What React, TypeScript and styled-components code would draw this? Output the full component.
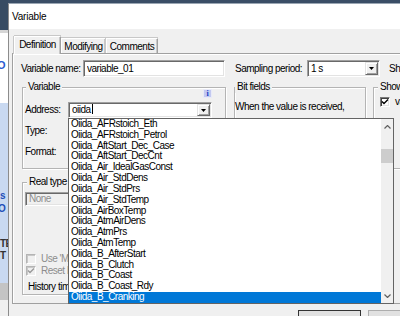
import React from "react";
import styled, { createGlobalStyle } from "styled-components";

const GlobalStyle = createGlobalStyle`
  html, body { margin: 0; padding: 0; width: 400px; height: 316px; overflow: hidden; background: #f0f0f0; }
  body { font-family: "Liberation Sans", Arial, sans-serif; font-size: 10px; letter-spacing: -0.5px; color: #000; }
  #root { width: 400px; height: 316px; }
`;

const Screen = styled.div`
  display: flex;
  width: 400px;
  height: 316px;
  overflow: hidden;
`;

const Backdrop = styled.div`
  width: 8px;
  flex: none;
  display: flex;
  flex-direction: column;
  overflow: hidden;
`;

const Band = styled.div<{ $h: number; $bg: string }>`
  flex: none;
  height: ${(p) => p.$h}px;
  background: ${(p) => p.$bg};
  overflow: hidden;
  white-space: nowrap;
`;

const BandGlyph = styled.div<{ $top: number; $left: number; $color: string; $size?: number }>`
  margin-top: ${(p) => p.$top}px;
  margin-left: ${(p) => p.$left}px;
  color: ${(p) => p.$color};
  font-size: ${(p) => p.$size ?? 10}px;
  line-height: 10px;
  height: 10px;
  font-weight: bold;
`;

const WindowColumn = styled.div`
  flex: 1;
  min-width: 0;
  display: flex;
  flex-direction: column;
`;

const BackWindowEdge = styled.div`
  height: 3px;
  flex: none;
  background: #3a4e66;
`;

const Dialog = styled.div`
  width: 500px;
  flex: 1;
  display: flex;
  flex-direction: column;
  background: #f0f0f0;
  border-left: 1px solid #8c8c8c;
  border-top: 1px solid #9aa6b3;
`;

const TitleBar = styled.div`
  height: 25px;
  flex: none;
  background: #ffffff;
  display: flex;
  align-items: center;
  padding-left: 3px;
  font-size: 10px;
  letter-spacing: -0.2px;
`;

const DialogBody = styled.div`
  display: flex;
  flex-direction: column;
  padding: 7px 0 0 3px;
`;

const TabStrip = styled.div`
  display: flex;
  align-items: flex-end;
  height: 17px;
  padding-left: 2px;
`;

const Tab = styled.div<{ $active?: boolean; $w: number }>`
  position: relative;
  z-index: ${(p) => (p.$active ? 2 : 1)};
  box-sizing: border-box;
  width: ${(p) => p.$w}px;
  height: ${(p) => (p.$active ? 18 : 15)}px;
  margin-bottom: ${(p) => (p.$active ? -1 : 0)}px;
  display: flex;
  align-items: center;
  justify-content: center;
  background: #f0f0f0;
  border: 1px solid #a0a0a0;
  border-bottom: none;
  border-left-color: #ffffff;
  border-top-color: #ffffff;
  box-shadow: -1px 0 0 #c8c8c8, 0 -1px 0 #c8c8c8, inset -1px 0 0 #c8c8c8;
  padding-bottom: ${(p) => (p.$active ? 2 : 0)}px;
`;

const TabPanel = styled.div`
  position: relative;
  height: 251px;
  box-sizing: border-box;
  border: 1px solid #a0a0a0;
  border-right: none;
  border-top-color: #a0a0a0;
  box-shadow: inset 1px 1px 0 #ffffff;
  padding: 6px 0 0 8px;
  display: flex;
  flex-direction: column;
`;

const FieldRow = styled.div`
  display: flex;
  align-items: center;
  height: 17px;
  white-space: nowrap;
`;

const Label = styled.div<{ $w?: number; $gap?: number; $muted?: boolean }>`
  flex: none;
  width: ${(p) => (p.$w ? `${p.$w}px` : "auto")};
  margin-left: ${(p) => p.$gap ?? 0}px;
  color: ${(p) => (p.$muted ? "#8d8d8d" : "#000")};
  white-space: nowrap;
  line-height: 12px;
`;

const Sunken = styled.div<{ $w: number; $h: number; $disabled?: boolean }>`
  position: relative;
  flex: none;
  box-sizing: border-box;
  width: ${(p) => p.$w}px;
  height: ${(p) => p.$h}px;
  background: ${(p) => (p.$disabled ? "#f0f0f0" : "#ffffff")};
  border: 1px solid;
  border-color: #a0a0a0 #ffffff #ffffff #a0a0a0;
  box-shadow: inset 1px 1px 0 #696969, inset -1px -1px 0 #e3e3e3;
  display: flex;
  align-items: center;
  padding: 0 1px 0 3px;
  color: ${(p) => (p.$disabled ? "#8d8d8d" : "#000")};
  white-space: nowrap;
`;

const FieldText = styled.span`
  flex: 1;
  line-height: 12px;
  overflow: hidden;
`;

const Caret = styled.span`
  display: inline-block;
  width: 1px;
  height: 10px;
  background: #000;
  vertical-align: -1px;
  margin-left: 1px;
`;

const DropButton = styled.div<{ $h: number }>`
  flex: none;
  box-sizing: border-box;
  width: 13px;
  height: ${(p) => p.$h}px;
  background: #f0f0f0;
  border: 1px solid;
  border-color: #e3e3e3 #696969 #696969 #e3e3e3;
  box-shadow: inset 1px 1px 0 #ffffff, inset -1px -1px 0 #a0a0a0;
  display: flex;
  align-items: center;
  justify-content: center;
`;

const Arrow = () => (
  <svg width="5" height="3" viewBox="0 0 5 3">
    <polygon points="0,0 5,0 2.5,3" fill="#000" />
  </svg>
);

const GroupsRow = styled.div`
  display: flex;
  align-items: flex-start;
  margin-top: 10px;
  margin-left: 1px;
`;

const GroupColumn = styled.div`
  display: flex;
  flex-direction: column;
  flex: none;
`;

const Group = styled.div<{ $w: number; $h: number; $gap?: number; $top?: number }>`
  flex: none;
  box-sizing: border-box;
  width: ${(p) => p.$w}px;
  height: ${(p) => p.$h}px;
  margin-left: ${(p) => p.$gap ?? 0}px;
  margin-top: ${(p) => p.$top ?? 0}px;
  border: 1px solid #b4b4b4;
  box-shadow: inset 1px 1px 0 #ffffff, 1px 1px 0 #ffffff;
  display: flex;
  flex-direction: column;
  white-space: nowrap;
`;

const GroupHeader = styled.div<{ $indent: number }>`
  display: flex;
  align-items: flex-start;
  height: 12px;
  margin-top: -7px;
  margin-left: ${(p) => p.$indent}px;
`;

const GroupTitle = styled.span`
  background: #f0f0f0;
  padding: 0 2px;
  line-height: 12px;
`;

const InfoBadge = styled.span`
  margin-left: auto;
  margin-right: 13px;
  margin-top: 8px;
  box-sizing: border-box;
  width: 9px;
  height: 9px;
  background: #c3c9f0;
  border: 1px solid #e8eaf8;
  color: #1c3fc4;
  font-family: "Liberation Serif", serif;
  font-weight: bold;
  font-size: 8px;
  line-height: 7px;
  letter-spacing: 0;
  text-align: center;
`;

const FormGrid = styled.div`
  display: grid;
  grid-template-columns: 43px 144px;
  grid-auto-rows: 16px;
  row-gap: 5px;
  margin-top: 9px;
  padding-left: 2px;
  align-items: center;
`;

const GroupText = styled.div<{ $top: number; $indent: number }>`
  margin-top: ${(p) => p.$top}px;
  margin-left: ${(p) => p.$indent}px;
  line-height: 12px;
`;

const CheckRow = styled.div<{ $top: number; $indent: number; $muted?: boolean }>`
  display: flex;
  align-items: center;
  gap: 5px;
  margin-top: ${(p) => p.$top}px;
  margin-left: ${(p) => p.$indent}px;
  height: 11px;
  color: ${(p) => (p.$muted ? "#8d8d8d" : "#000")};
  line-height: 12px;
`;

const CheckBox = styled.span<{ $disabled?: boolean }>`
  flex: none;
  box-sizing: border-box;
  width: 10px;
  height: 10px;
  background: ${(p) => (p.$disabled ? "#f0f0f0" : "#ffffff")};
  border: 1px solid;
  border-color: ${(p) => (p.$disabled ? "#b4b4b4 #ffffff #ffffff #b4b4b4" : "#7a7a7a #ffffff #ffffff #7a7a7a")};
  box-shadow: ${(p) => (p.$disabled ? "inset 1px 1px 0 #c8c8c8" : "inset 1px 1px 0 #404040, inset -1px -1px 0 #e3e3e3")};
  display: flex;
  align-items: center;
  justify-content: center;
`;

const Check = ({ color }: { color: string }) => (
  <svg width="8" height="8" viewBox="0 0 8 8">
    <polyline points="1,3.5 3,5.5 7,1.5" fill="none" stroke={color} strokeWidth="1.4" />
  </svg>
);

const ComboAnchor = styled.div`
  position: relative;
`;

const DropList = styled.div`
  position: absolute;
  z-index: 10;
  top: 100%;
  left: 0;
  width: 326px;
  height: 186px;
  box-sizing: border-box;
  background: #ffffff;
  border: 1px solid #646464;
  display: flex;
`;

const Items = styled.div`
  flex: 1;
  display: flex;
  flex-direction: column;
`;

const Item = styled.div<{ $selected?: boolean }>`
  height: 10.82px;
  line-height: 10.82px;
  padding-left: 2px;
  background: ${(p) => (p.$selected ? "#0078d7" : "transparent")};
  color: ${(p) => (p.$selected ? "#ffffff" : "#000000")};
  white-space: nowrap;
`;

const ScrollBar = styled.div`
  flex: none;
  width: 12px;
  background: #f0f0f0;
  display: flex;
  flex-direction: column;
`;

const ScrollArrow = styled.div<{ $h: number }>`
  flex: none;
  height: ${(p) => p.$h}px;
  display: flex;
  align-items: center;
  justify-content: center;
`;

const ScrollTrack = styled.div`
  flex: 1;
`;

const Thumb = styled.div`
  margin-top: 14px;
  height: 14px;
  background: #cdcdcd;
`;

const Chevron = ({ up }: { up?: boolean }) => (
  <svg width="7" height="4" viewBox="0 0 7 4">
    <polyline
      points={up ? "0.5,3.5 3.5,0.5 6.5,3.5" : "0.5,0.5 3.5,3.5 6.5,0.5"}
      fill="none"
      stroke="#606060"
      strokeWidth="1.2"
    />
  </svg>
);

const Footer = styled.div`
  display: flex;
  justify-content: flex-end;
  gap: 7px;
  padding: 6px 8px 0 0;
`;

const PushButton = styled.div<{ $default?: boolean }>`
  box-sizing: border-box;
  width: 63px;
  height: 21px;
  background: #e1e1e1;
  border: 1px solid ${(p) => (p.$default ? "#333333" : "#adadad")};
  display: flex;
  align-items: center;
  justify-content: center;
`;

const addresses = [
  "Oiida_AFRstoich_Eth",
  "Oiida_AFRstoich_Petrol",
  "Oiida_AftStart_Dec_Case",
  "Oiida_AftStart_DecCnt",
  "Oiida_Air_IdealGasConst",
  "Oiida_Air_StdDens",
  "Oiida_Air_StdPrs",
  "Oiida_Air_StdTemp",
  "Oiida_AirBoxTemp",
  "Oiida_AtmAirDens",
  "Oiida_AtmPrs",
  "Oiida_AtmTemp",
  "Oiida_B_AfterStart",
  "Oiida_B_Clutch",
  "Oiida_B_Coast",
  "Oiida_B_Coast_Rdy",
  "Oiida_B_Cranking",
];

export default function App() {
  return (
    <>
      <GlobalStyle />
      <Screen>
        <Backdrop>
          <Band $h={30} $bg="#384c63" />
          <Band $h={3} $bg="#d6d6d6" />
          <Band $h={70} $bg="#ffffff">
            <BandGlyph $top={27} $left={-3} $color="#2a5bd0" $size={11}>O</BandGlyph>
          </Band>
          <Band $h={180} $bg="#c9d9f1">
            <BandGlyph $top={88} $left={0} $color="#1f4fb8">s</BandGlyph>
            <BandGlyph $top={3} $left={-2} $color="#1f4fb8">O</BandGlyph>
            <BandGlyph $top={25} $left={0} $color="#333">TE</BandGlyph>
            <BandGlyph $top={2} $left={0} $color="#333">T</BandGlyph>
          </Band>
          <Band $h={17} $bg="#c4c4c4" />
          <Band $h={16} $bg="#f0f0f0" />
        </Backdrop>
        <WindowColumn>
          <BackWindowEdge />
          <Dialog>
            <TitleBar>Variable</TitleBar>
            <DialogBody>
              <TabStrip>
                <Tab $active $w={47}>Definition</Tab>
                <Tab $w={45}>Modifying</Tab>
                <Tab $w={52}>Comments</Tab>
              </TabStrip>
              <TabPanel>
                <FieldRow>
                  <Label $w={62}>Variable name:</Label>
                  <Sunken $w={142} $h={17}>
                    <FieldText>variable_01</FieldText>
                  </Sunken>
                  <Label $w={72} $gap={10}>Sampling period:</Label>
                  <Sunken $w={73} $h={17}>
                    <FieldText>1 s</FieldText>
                    <DropButton $h={13}><Arrow /></DropButton>
                  </Sunken>
                  <Label $gap={9}>Show in window</Label>
                </FieldRow>
                <GroupsRow>
                  <GroupColumn>
                    <Group $w={204} $h={82}>
                      <GroupHeader $indent={3}>
                        <GroupTitle>Variable</GroupTitle>
                        <InfoBadge>i</InfoBadge>
                      </GroupHeader>
                      <FormGrid>
                        <Label>Address:</Label>
                        <ComboAnchor>
                          <Sunken $w={144} $h={16}>
                            <FieldText>oiida<Caret /></FieldText>
                            <DropButton $h={12}><Arrow /></DropButton>
                          </Sunken>
                          <DropList>
                            <Items>
                              {addresses.map((a, i) => (
                                <Item key={a} $selected={i === addresses.length - 1}>{a}</Item>
                              ))}
                            </Items>
                            <ScrollBar>
                              <ScrollArrow $h={16}><Chevron up /></ScrollArrow>
                              <ScrollTrack><Thumb /></ScrollTrack>
                              <ScrollArrow $h={14}><Chevron /></ScrollArrow>
                            </ScrollBar>
                          </DropList>
                        </ComboAnchor>
                        <Label>Type:</Label>
                        <Sunken $w={144} $h={16}>
                          <FieldText />
                          <DropButton $h={12}><Arrow /></DropButton>
                        </Sunken>
                        <Label>Format:</Label>
                        <Sunken $w={144} $h={16}>
                          <FieldText />
                          <DropButton $h={12}><Arrow /></DropButton>
                        </Sunken>
                      </FormGrid>
                    </Group>
                    <Group $w={204} $h={113} $top={13}>
                      <GroupHeader $indent={4}>
                        <GroupTitle>Real type format</GroupTitle>
                      </GroupHeader>
                      <GroupText $top={4} $indent={2}>
                        <Sunken $w={187} $h={14} $disabled>
                          <FieldText>None</FieldText>
                        </Sunken>
                      </GroupText>
                      <CheckRow $top={47} $indent={3} $muted>
                        <CheckBox $disabled />
                        <span>Use 'Min/Max' values</span>
                      </CheckRow>
                      <CheckRow $top={1} $indent={3} $muted>
                        <CheckBox $disabled><Check color="#9a9a9a" /></CheckBox>
                        <span>Reset history</span>
                      </CheckRow>
                      <GroupText $top={5} $indent={5}>History time</GroupText>
                    </Group>
                  </GroupColumn>
                  <Group $w={132} $h={82} $gap={8}>
                    <GroupHeader $indent={0}>
                      <GroupTitle>Bit fields</GroupTitle>
                    </GroupHeader>
                    <GroupText $top={8} $indent={0}>When the value is received,</GroupText>
                  </Group>
                  <Group $w={120} $h={82} $gap={7}>
                    <GroupHeader $indent={4}>
                      <GroupTitle>Show</GroupTitle>
                    </GroupHeader>
                    <CheckRow $top={3} $indent={6}>
                      <CheckBox><Check color="#000" /></CheckBox>
                      <span>value</span>
                    </CheckRow>
                  </Group>
                </GroupsRow>
              </TabPanel>
              <Footer>
                <PushButton $default>OK</PushButton>
                <PushButton>Cancel</PushButton>
                <PushButton>Help</PushButton>
              </Footer>
            </DialogBody>
          </Dialog>
        </WindowColumn>
      </Screen>
    </>
  );
}
